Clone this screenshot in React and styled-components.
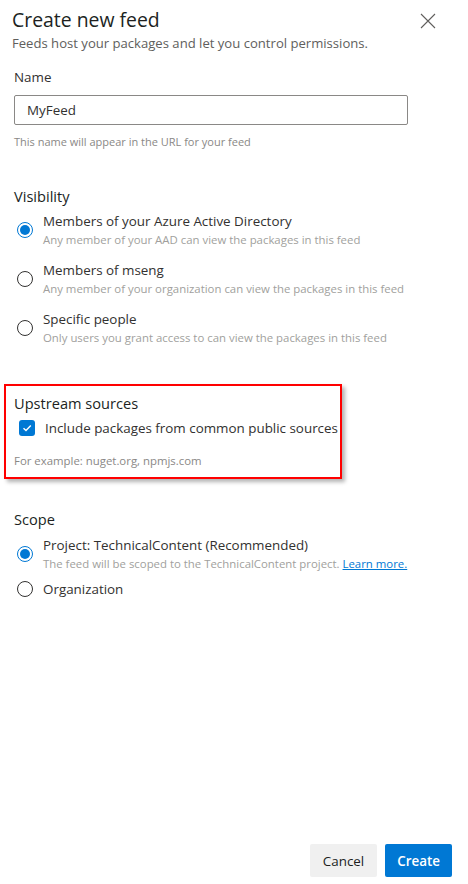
import React from "react";
import styled, { createGlobalStyle } from "styled-components";

const Global = createGlobalStyle`
  html, body { margin: 0; padding: 0; background: #fff; }
  body { font-family: "Open Sans", "Noto Sans", "Liberation Sans", sans-serif; color: #323130; }
  * { box-sizing: border-box; }
`;

const Page = styled.div`
  min-height: 100vh;
  display: flex;
  flex-direction: column;
  padding: 6px 16px 7px 12px;
`;

const Header = styled.div`
  display: flex;
  justify-content: space-between;
  align-items: flex-start;
`;

const Title = styled.h1`
  margin: 0;
  font-size: 19.4px;
  line-height: 28px;
  font-weight: 400;
  color: #201f1e;
`;

const Subtitle = styled.div`
  font-size: 13.1px;
  line-height: 18px;
  color: #605e5c;
`;

const CloseButton = styled.button`
  border: 0;
  background: none;
  padding: 0;
  margin: 7px 16px 0 0;
  width: 16px;
  height: 16px;
  display: flex;
  cursor: pointer;
`;

const Body = styled.div`
  padding-left: 2px;
  display: flex;
  flex-direction: column;
`;

const Label = styled.div`
  margin-top: 15px;
  font-size: 13.4px;
  line-height: 20px;
  color: #323130;
`;

const Input = styled.input`
  margin-top: 8px;
  width: 394px;
  height: 30px;
  border: 1px solid #8a8886;
  border-radius: 2px;
  padding: 0 12px;
  font-family: inherit;
  font-size: 13.4px;
  color: #323130;
  outline: none;
`;

const Helper = styled.div`
  margin-top: ${(p) => p.$mt || 0}px;
  font-size: ${(p) => p.$size || 11}px;
  line-height: 16px;
  color: #8a8886;
`;

const SectionTitle = styled.div`
  margin-top: ${(p) => p.$mt}px;
  font-size: 14.6px;
  line-height: 22px;
  color: #201f1e;
`;

const Options = styled.div`
  display: flex;
  flex-direction: column;
  gap: ${(p) => p.$gap}px;
  margin-top: ${(p) => p.$mt}px;
`;

const Option = styled.label`
  display: flex;
  align-items: center;
  gap: 10px;
  padding-left: 3px;
  cursor: pointer;
`;

const Radio = styled.span`
  width: 16px;
  height: 16px;
  flex: none;
  border-radius: 50%;
  border: 1px solid ${(p) => (p.$checked ? "#0078d4" : "#323130")};
  position: relative;
  &::after {
    content: "";
    display: ${(p) => (p.$checked ? "block" : "none")};
    position: absolute;
    left: 2px;
    top: 2px;
    width: 10px;
    height: 10px;
    border-radius: 50%;
    background: #0078d4;
  }
`;

const OptionText = styled.div`
  display: flex;
  flex-direction: column;
`;

const OptionLabel = styled.div`
  font-size: 13.4px;
  line-height: 20px;
  color: #323130;
`;

const OptionDesc = styled.div`
  font-size: 11.4px;
  line-height: 18px;
  color: #a19f9d;
  white-space: nowrap;
`;

const Link = styled.a`
  color: #0078d4;
  text-decoration: underline;
`;

const Highlight = styled.div`
  margin: 37px 0 0 -10px;
  width: 338px;
  border: 2px solid #ff0000;
  box-shadow: 3px 3px 4px rgba(0, 0, 0, 0.3);
  padding: 6px 8px 8px 8px;
  display: flex;
  flex-direction: column;
`;

const CheckRow = styled.label`
  margin-top: 4px;
  display: flex;
  align-items: center;
  gap: 10px;
  padding-left: 5px;
  font-size: 13.4px;
  line-height: 20px;
  color: #323130;
  white-space: nowrap;
`;

const Checkbox = styled.span`
  width: 16px;
  height: 16px;
  flex: none;
  border-radius: 3px;
  background: #0078d4;
  display: flex;
  align-items: center;
  justify-content: center;
`;

const Footer = styled.div`
  margin-top: auto;
  display: flex;
  justify-content: flex-end;
  gap: 8px;
`;

const Button = styled.button`
  height: 33px;
  padding: 0 ${(p) => (p.$primary ? 12 : 13)}px;
  border: 0;
  border-radius: 2px;
  font-family: inherit;
  font-size: 13.4px;
  font-weight: ${(p) => (p.$primary ? 600 : 400)};
  background: ${(p) => (p.$primary ? "#0078d4" : "#f0f0f0")};
  color: ${(p) => (p.$primary ? "#fff" : "#201f1e")};
  cursor: pointer;
`;

function RadioOption({ checked, label, desc }) {
  return (
    <Option>
      <Radio $checked={checked} />
      <OptionText>
        <OptionLabel>{label}</OptionLabel>
        {desc && <OptionDesc>{desc}</OptionDesc>}
      </OptionText>
    </Option>
  );
}

export default function App() {
  return (
    <>
      <Global />
      <Page>
        <Header>
          <div>
            <Title>Create new feed</Title>
            <Subtitle>Feeds host your packages and let you control permissions.</Subtitle>
          </div>
          <CloseButton aria-label="Close">
            <svg width="16" height="16" viewBox="0 0 16 16">
              <path d="M1 1 L15 15 M15 1 L1 15" stroke="#605e5c" strokeWidth="1.1" fill="none" />
            </svg>
          </CloseButton>
        </Header>
        <Body>
          <Label>Name</Label>
          <Input defaultValue="MyFeed" />
          <Helper $mt={9}>This name will appear in the URL for your feed</Helper>

          <SectionTitle $mt={35}>Visibility</SectionTitle>
          <Options $gap={11} $mt={4}>
            <RadioOption
              checked
              label="Members of your Azure Active Directory"
              desc="Any member of your AAD can view the packages in this feed"
            />
            <RadioOption
              label="Members of mseng"
              desc="Any member of your organization can view the packages in this feed"
            />
            <RadioOption
              label="Specific people"
              desc="Only users you grant access to can view the packages in this feed"
            />
          </Options>

          <Highlight>
            <SectionTitle $mt={0}>Upstream sources</SectionTitle>
            <CheckRow>
              <Checkbox>
                <svg width="12" height="12" viewBox="0 0 12 12">
                  <path d="M2.5 6.2 L5 8.6 L9.8 3.6" stroke="#fff" strokeWidth="1.4" fill="none" />
                </svg>
              </Checkbox>
              Include packages from common public sources
            </CheckRow>
            <Helper $mt={15} $size={11.4}>For example: nuget.org, npmjs.com</Helper>
          </Highlight>

          <SectionTitle $mt={29}>Scope</SectionTitle>
          <Options $gap={6} $mt={5}>
            <Option>
              <Radio $checked />
              <OptionText>
                <OptionLabel>Project: TechnicalContent (Recommended)</OptionLabel>
                <OptionDesc>
                  The feed will be scoped to the TechnicalContent project. <Link href="#">Learn more.</Link>
                </OptionDesc>
              </OptionText>
            </Option>
            <RadioOption label="Organization" />
          </Options>
        </Body>
        <Footer>
          <Button>Cancel</Button>
          <Button $primary>Create</Button>
        </Footer>
      </Page>
    </>
  );
}
